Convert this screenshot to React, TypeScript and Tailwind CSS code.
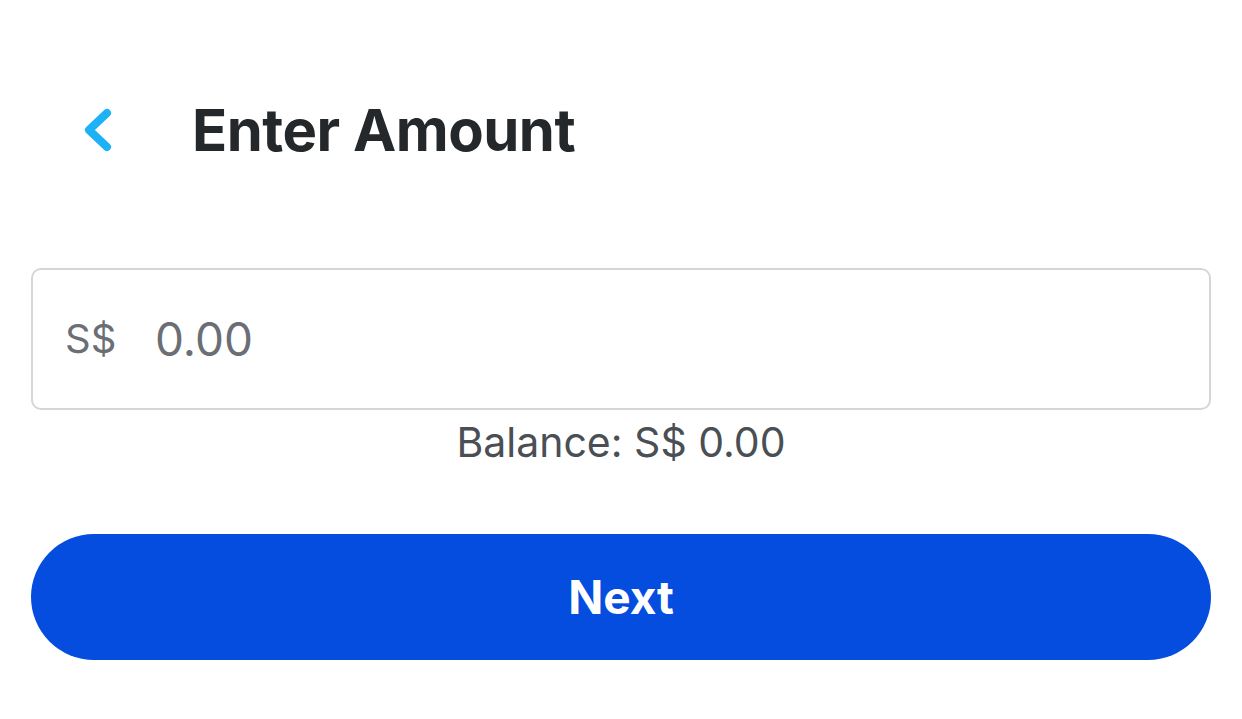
import React from 'react';

const ChevronLeft: React.FC = () => (
  <svg width="36" height="48" viewBox="0 0 36 48" fill="none">
    <path
      d="M26 7 L8 24 L26 41"
      stroke="#1db1f6"
      strokeWidth="8"
      strokeLinecap="round"
      strokeLinejoin="round"
    />
  </svg>
);

const App: React.FC = () => {
  return (
    <div
      className="w-[1242px] h-[719px] bg-white flex flex-col px-[31px]"
      style={{ fontFamily: 'Inter, "Noto Sans", sans-serif' }}
    >
      {/* Header */}
      <div className="flex items-center h-[108px] mt-[76px]">
        <div className="w-[161px] pl-[50px] flex items-center">
          <ChevronLeft />
        </div>
        <h1 className="text-[58px] font-bold text-[#25282b] tracking-[-0.5px] leading-none">
          Enter Amount
        </h1>
      </div>

      {/* Amount input */}
      <div className="mt-[84px] h-[142px] border-2 border-[#d4d6d9] rounded-[10px] flex items-center px-[32px]">
        <span className="text-[40px] text-[#6b6f75] w-[90px]">S$</span>
        <span className="text-[46px] text-[#6b6f75]">0.00</span>
      </div>

      <div className="text-center text-[41px] text-[#4a4f55] leading-none mt-[12px]">
        Balance: S$ 0.00
      </div>

      {/* Next button */}
      <button className="mt-[71px] h-[126px] w-full rounded-full bg-[#044ddf] text-white text-[46px] font-bold">
        Next
      </button>
    </div>
  );
};

export default App;
